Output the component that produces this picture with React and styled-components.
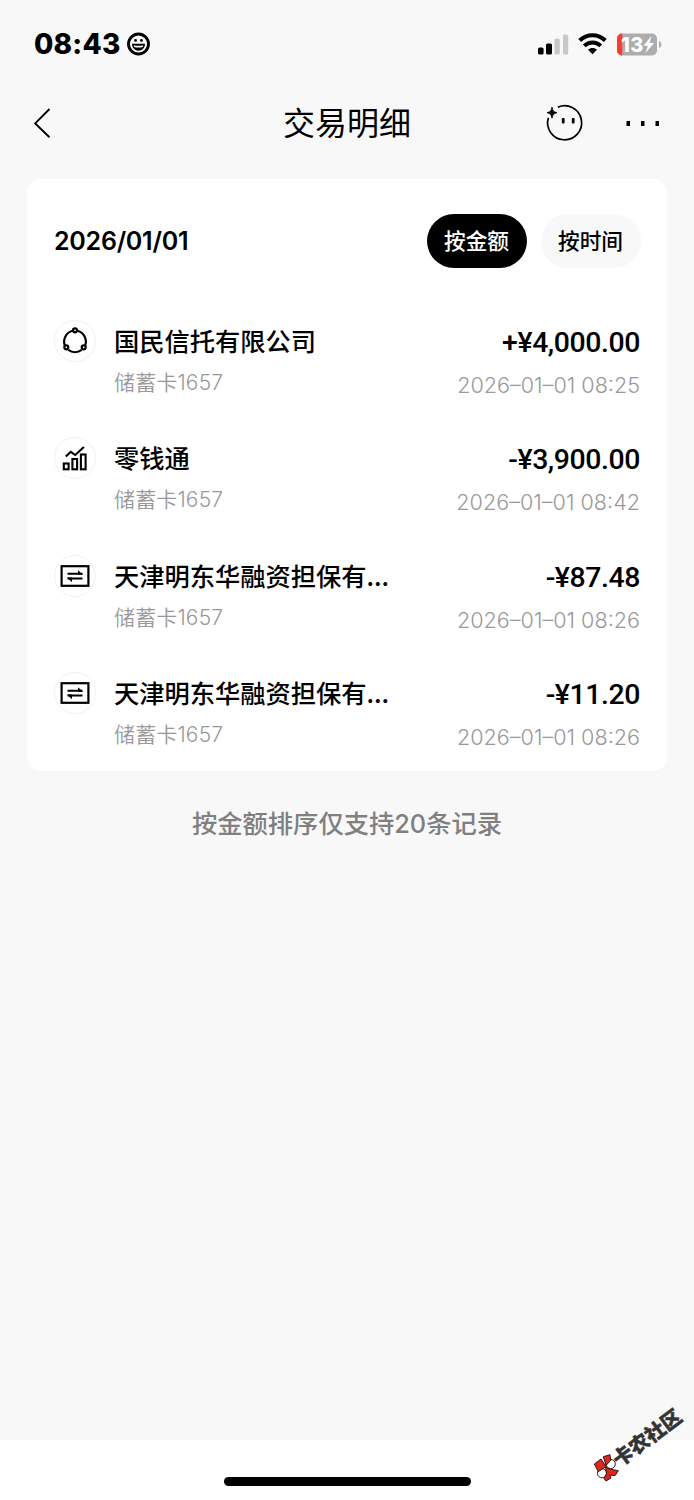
import React from "react";
import styled, { createGlobalStyle } from "styled-components";

const colors = {
  page: "#f8f8f8",
  card: "#ffffff",
  text: "#000000",
  muted: "#999999",
  footer: "#808080",
  ring: "#eef2f5",
};

const cjk = `"Noto Sans CJK SC", sans-serif`;

const GlobalStyle = createGlobalStyle`
  * {
    box-sizing: border-box;
  }

  body {
    margin: 0;
    background: ${colors.page};
    color: ${colors.text};
    font-family: Inter, ${cjk};
    -webkit-font-smoothing: antialiased;
  }
`;

const Screen = styled.div`
  position: relative;
  display: flex;
  flex-direction: column;
  width: 694px;
  height: 1500px;
  overflow: hidden;
  background: ${colors.page};
`;

const StatusBar = styled.header`
  display: flex;
  align-items: center;
  justify-content: space-between;
  height: 88px;
  padding: 0 32px 0 34px;
`;

const StatusGroup = styled.div`
  display: flex;
  align-items: center;
  gap: ${({ $gap }) => $gap}px;
`;

const Clock = styled.span`
  width: 87px;
  font-size: 28px;
  font-weight: 800;
  line-height: 34px;
  letter-spacing: 0.2px;
  white-space: nowrap;
`;

const NavBar = styled.nav`
  display: grid;
  grid-template-columns: 150px 1fr 150px;
  align-items: center;
  height: 70px;
  padding: 0 32px;
`;

const NavTitle = styled.h1`
  margin: 0;
  padding-bottom: 5px;
  font-family: ${cjk};
  font-size: 32px;
  font-weight: 400;
  line-height: 44px;
  text-align: center;
`;

const NavActions = styled.div`
  display: flex;
  align-items: center;
  justify-content: flex-end;
  gap: 43px;
`;

const Icon = styled.svg`
  display: block;
  flex: none;
  overflow: visible;
`;

const Card = styled.main`
  height: 592px;
  margin: 21px 27px 0;
  padding: 35px 26px 0 27px;
  border-radius: 14px;
  background: ${colors.card};
`;

const CardHeader = styled.div`
  display: flex;
  align-items: center;
  justify-content: space-between;
  height: 54px;
`;

const DateTitle = styled.h2`
  margin: 0;
  font-size: 25px;
  font-weight: 600;
  line-height: 32px;
  letter-spacing: -0.25px;
`;

const Tabs = styled.div`
  display: flex;
  gap: 14px;
`;

const Tab = styled.button`
  width: 100px;
  height: 54px;
  padding: 0 1px 2px 0;
  border: 0;
  border-radius: 27px;
  background: ${({ $active }) => ($active ? "#000" : colors.page)};
  color: ${({ $active }) => ($active ? "#fff" : "#000")};
  font-family: ${cjk};
  font-size: 21.7px;
  font-weight: 500;
  line-height: 52px;
`;

const List = styled.ul`
  margin: 52px 0 0;
  padding: 0 1px 0 0;
  list-style: none;
`;

const Item = styled.li`
  display: flex;
  height: 117.3px;
`;

const IconRing = styled.div`
  display: flex;
  align-items: center;
  justify-content: center;
  width: 42px;
  height: 42px;
  border: 1px solid ${colors.ring};
  border-radius: 50%;
`;

const Details = styled.div`
  flex: 1;
  margin-left: 18px;
`;

const Name = styled.div`
  height: 41px;
  font-family: ${cjk};
  font-size: 25.25px;
  font-weight: 500;
  line-height: 40px;
  white-space: nowrap;
`;

const CardNumber = styled.div`
  font-size: 21px;
  font-weight: 350;
  line-height: 43px;
  letter-spacing: 0.15px;
  color: ${colors.muted};
`;

const Figures = styled.div`
  text-align: right;
`;

const Amount = styled.div`
  height: 44px;
  padding-top: 1px;
  font-family: Roboto, sans-serif;
  font-size: 28.4px;
  font-weight: 500;
  line-height: 44px;
  letter-spacing: -0.4px;
`;

const Time = styled.div`
  font-size: 21.6px;
  font-weight: 350;
  line-height: 42px;
  color: ${colors.muted};
  white-space: nowrap;
`;

const Footnote = styled.p`
  margin: 33px 0 0;
  font-family: Inter, ${cjk};
  font-size: 25.3px;
  font-weight: 500;
  line-height: 40px;
  color: ${colors.footer};
  text-align: center;
`;

const HomeArea = styled.footer`
  display: flex;
  justify-content: center;
  height: 60px;
  margin-top: auto;
  padding-top: 37px;
  background: ${colors.card};
`;

const HomeIndicator = styled.div`
  width: 247px;
  height: 9px;
  border-radius: 5px;
  background: #000;
`;

// stamp laid over the bottom corner of the screen
const Stamp = styled.div`
  position: absolute;
  left: 592px;
  top: 1454px;
  display: flex;
  align-items: flex-start;
  transform: rotate(-37deg);
  transform-origin: 14px 14px;
`;

const StampText = styled.span`
  margin-left: -3px;
  font-family: ${cjk};
  font-size: 20px;
  font-weight: 900;
  line-height: 28px;
  color: #333;
  -webkit-text-stroke: 0.4px #333;
  white-space: nowrap;
`;

const SmileyIcon = () => (
  <Icon width="24" height="24" viewBox="0 0 24 24">
    <circle cx="11.5" cy="12" r="10" fill="none" stroke="#000" strokeWidth="2.9" />
    <circle cx="8.6" cy="8.4" r="1.4" />
    <circle cx="14.4" cy="8.4" r="1.4" />
    <path d="M5 11.8h13c0 4.2-2.900 6.900-6.500 6.900S5 16 5 11.800z" />
    <path d="M6.700 13.200c3 .8 6.600.8 9.600 0l-.5 1.700c-2.600.8-6 .8-8.600 0z" fill="#f8f8f8" />
  </Icon>
);

const SignalIcon = () => (
  <Icon width="30" height="21" viewBox="0 0 30 21">
    <rect x="0" y="13.5" width="5.6" height="7" rx="1.6" />
    <rect x="8" y="9.5" width="6" height="11" rx="1.6" />
    <rect x="16.5" y="4.5" width="5.3" height="16" rx="1.6" fill="#c8c8c8" />
    <rect x="25" y="0.5" width="5.2" height="20" rx="1.6" fill="#c8c8c8" />
  </Icon>
);

const WifiIcon = () => (
  <Icon width="29" height="22" viewBox="0 0 29 22" fill="none" stroke="#000" strokeWidth="4">
    <path d="M1.7 7.500C9 .4 20 .4 27.300 7.500" />
    <path d="M6.300 12.900c4.700-4.400 11.700-4.400 16.400 0" />
    <path d="M10 16.800c2.700-2.300 6.300-2.300 9 0l-4.500 4.500z" fill="#000" stroke="none" />
  </Icon>
);

const BatteryIcon = () => (
  <Icon width="45" height="23" viewBox="0 0 45 23">
    <rect x="0" y="0.5" width="40" height="22" rx="5" fill="#adadad" />
    <path d="M5.2.5H5a5 5 0 0 0-5 5v12a5 5 0 0 0 5 5h.2z" fill="#ff3b30" />
    <path d="M42 8v7c1.5-.5 2.4-2 2.4-3.500S43.500 8.500 42 8z" fill="#adadad" />
    <text x="4" y="18.600" fill="#fff" fontFamily="Inter" fontSize="20" fontWeight="800" textLength="22.500">
      13
    </text>
    <path d="M34.500 2.800L26.500 12.700h4.300l-2.200 7.300 8.400-10h-4.500z" fill="#fff" />
  </Icon>
);

const BackIcon = () => (
  <Icon width="18" height="30" viewBox="0 0 18 30" fill="none" stroke="#000" strokeWidth="1.9">
    <path d="M17.500 1L3.200 15.400l14.300 13.900" />
  </Icon>
);

const AssistantIcon = () => (
  <Icon width="38" height="38" viewBox="0 0 38 38">
    <path
      d="M12.800 3.200A17 17 0 1 1 3.400 13.700"
      fill="none"
      stroke="#000"
      strokeWidth="1.700"
    />
    <path
      d="M7 3.200c.8 3.800 1.700 4.700 5 5.500-3.300.8-4.200 1.700-5 5.500-.8-3.800-1.700-4.700-5-5.500 3.300-.8 4.200-1.700 5-5.500z"
      stroke="#000"
      strokeWidth="0.800"
    />
    <rect x="16.800" y="14" width="2.800" height="5.500" rx="1" />
    <rect x="26.800" y="14" width="2.800" height="5.500" rx="1" />
  </Icon>
);

const MoreIcon = () => (
  <Icon width="36" height="6" viewBox="0 0 36 6">
    <rect x="0.500" y="1" width="3.500" height="5" />
    <rect x="15" y="1" width="3.500" height="5" />
    <rect x="29.500" y="1" width="3.500" height="5" />
  </Icon>
);

const TrustIcon = () => (
  <Icon width="26" height="28" viewBox="0 0 26 28" fill="none" stroke="#000" strokeWidth="2.200">
    <path d="M10.600 3.800A11.200 11.200 0 0 0 2.800 18.500M15.400 3.800a11.200 11.200 0 0 1 7.800 14.700M6.300 22.800a11.200 11.200 0 0 0 13.400 0" />
    <circle cx="13" cy="3.300" r="2" />
    <circle cx="4.300" cy="20.300" r="2" />
    <circle cx="21.700" cy="20.300" r="2" />
  </Icon>
);

const FundIcon = () => (
  <Icon width="26" height="26" viewBox="0 0 26 26" fill="none" stroke="#000" strokeWidth="2.100">
    <rect x="1.800" y="18.500" width="4.800" height="5.800" />
    <rect x="10.400" y="14" width="4.700" height="10.300" />
    <rect x="18.900" y="9.500" width="4.700" height="14.800" />
    <path d="M3.800 11.500l5-4.700 4.400 3.200 8.700-8" />
  </Icon>
);

const TransferIcon = () => (
  <Icon width="30" height="24" viewBox="0 0 30 24" fill="none" stroke="#000" strokeWidth="2.200">
    <rect x="1.600" y="2.200" width="26.800" height="19.600" />
    <path d="M7.500 9.800h15M7.500 14.600h15" strokeWidth="2" />
    <path d="M18 6.200l5 4.600h-5zM12 18.300l-5-4.700h5z" fill="#000" stroke="none" />
  </Icon>
);

const PinwheelIcon = () => (
  <Icon width="28" height="28" viewBox="0 0 28 28" stroke="#111" strokeWidth="0.900">
    <g transform="rotate(37 14 14)">
      <circle cx="18.700" cy="10" r="4.600" fill="#fff" />
      <circle cx="10" cy="19.200" r="4.600" fill="#fff" />
      <path d="M14 12.500l-7.700 5.200L2.300 10 9 5z" fill="#e1251b" />
      <path d="M14 11.500l-2.700-8.800L18 .7l.7 5.500z" fill="#e1251b" />
      <path d="M13.500 13l5 2.200 7.800 1.500-3.300 5-5.500-.7 1.500 3-5 3-2-2.500 2.500-5z" fill="#e1251b" />
    </g>
  </Icon>
);

const transactions = [
  {
    icon: TrustIcon,
    name: "国民信托有限公司",
    amount: "+¥4,000.00",
    time: "2026–01–01 08:25",
  },
  {
    icon: FundIcon,
    name: "零钱通",
    amount: "-¥3,900.00",
    time: "2026–01–01 08:42",
  },
  {
    icon: TransferIcon,
    name: "天津明东华融资担保有...",
    amount: "-¥87.48",
    time: "2026–01–01 08:26",
  },
  {
    icon: TransferIcon,
    name: "天津明东华融资担保有...",
    amount: "-¥11.20",
    time: "2026–01–01 08:26",
  },
];

const Transaction = ({ icon: Glyph, name, amount, time }) => {
  return (
    <Item>
      <IconRing>
        <Glyph />
      </IconRing>
      <Details>
        <Name>{name}</Name>
        <CardNumber>储蓄卡1657</CardNumber>
      </Details>
      <Figures>
        <Amount>{amount}</Amount>
        <Time>{time}</Time>
      </Figures>
    </Item>
  );
};

const App = () => {
  return (
    <Screen>
      <GlobalStyle />
      <StatusBar>
        <StatusGroup $gap={6}>
          <Clock>08:43</Clock>
          <SmileyIcon />
        </StatusGroup>
        <StatusGroup $gap={10}>
          <SignalIcon />
          <WifiIcon />
          <BatteryIcon />
        </StatusGroup>
      </StatusBar>

      <NavBar>
        <BackIcon />
        <NavTitle>交易明细</NavTitle>
        <NavActions>
          <AssistantIcon />
          <MoreIcon />
        </NavActions>
      </NavBar>

      <Card>
        <CardHeader>
          <DateTitle>2026/01/01</DateTitle>
          <Tabs>
            <Tab $active>按金额</Tab>
            <Tab>按时间</Tab>
          </Tabs>
        </CardHeader>
        <List>
          {transactions.map((item, index) => (
            <Transaction key={index} {...item} />
          ))}
        </List>
      </Card>

      <Footnote>按金额排序仅支持20条记录</Footnote>

      <HomeArea>
        <HomeIndicator />
      </HomeArea>

      <Stamp>
        <PinwheelIcon />
        <StampText>卡农社区</StampText>
      </Stamp>
    </Screen>
  );
};

export default App;
